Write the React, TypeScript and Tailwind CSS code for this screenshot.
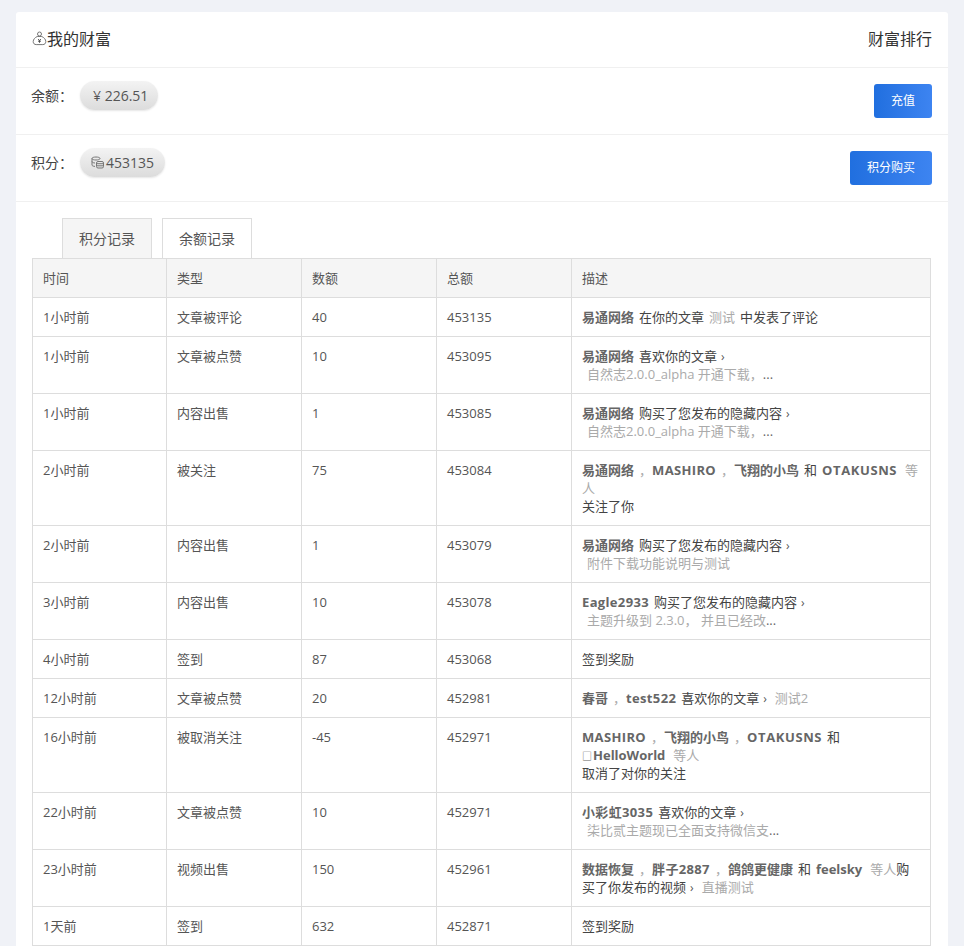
import type { ReactNode } from 'react';

const B = ({ children }: { children: ReactNode }) => (
  <span className="font-bold text-[#666]">{children}</span>
);
// bold latin names run a little wider in the reference
const L = ({ children }: { children: ReactNode }) => (
  <span className="font-bold tracking-[0.35px] text-[#666]">{children}</span>
);
const Otaku = () => <span className="font-bold tracking-[0.6px] text-[#666]">OTAKUSNS</span>;
const G = ({ children }: { children: ReactNode }) => <span className="text-[#aaa]">{children}</span>;
const Sp = () => <span className="inline-block w-[5px]" />;
const Comma = () => (
  <>
    <Sp />
    <G>，</G>
  </>
);
const Others = () => (
  <>
    <span className="inline-block w-[8px]" />
    <G>等人</G>
  </>
);
const Arrow = () => <span className="ml-[4px] text-xs text-[#555]">›</span>;
const Sub = ({ children }: { children: ReactNode }) => (
  <div className="pl-[5px] text-[#aaa]">{children}</div>
);
const Dots = () => <span className="text-[#666]">...</span>;

const ROWS: [string, string, string, string, ReactNode][] = [
  ['1小时前', '文章被评论', '40', '453135', <><B>易通网络</B><Sp />在你的文章<Sp /><G>测试</G><Sp />中发表了评论</>],
  ['1小时前', '文章被点赞', '10', '453095', <><B>易通网络</B><Sp />喜欢你的文章<Arrow /><Sub>自然志2.0.0_alpha 开通下载，<Dots /></Sub></>],
  ['1小时前', '内容出售', '1', '453085', <><B>易通网络</B><Sp />购买了您发布的隐藏内容<Arrow /><Sub>自然志2.0.0_alpha 开通下载，<Dots /></Sub></>],
  ['2小时前', '被关注', '75', '453084', <><B>易通网络</B><Comma /><L>MASHIRO</L><Comma /><B>飞翔的小鸟</B><Sp />和<Sp /><Otaku /><Others /><div>关注了你</div></>],
  ['2小时前', '内容出售', '1', '453079', <><B>易通网络</B><Sp />购买了您发布的隐藏内容<Arrow /><Sub>附件下载功能说明与测试</Sub></>],
  ['3小时前', '内容出售', '10', '453078', <><L>Eagle2933</L><Sp />购买了您发布的隐藏内容<Arrow /><Sub>主题升级到 2.3.0， 并且已经改<Dots /></Sub></>],
  ['4小时前', '签到', '87', '453068', '签到奖励'],
  ['12小时前', '文章被点赞', '20', '452981', <><B>春哥</B><Comma /><L>test522</L><Sp />喜欢你的文章<Arrow /><span className="inline-block w-[8px]" /><G>测试2</G></>],
  ['16小时前', '被取消关注', '-45', '452971', <><L>MASHIRO</L><Comma /><B>飞翔的小鸟</B><Comma /><Otaku /><Sp />和<br /><span className="inline-block w-[11px] text-[10px] leading-none text-[#666]">□</span><B>HelloWorld</B><Others /><div>取消了对你的关注</div></>],
  ['22小时前', '文章被点赞', '10', '452971', <><L>小彩虹3035</L><Sp />喜欢你的文章<Arrow /><Sub>柒比贰主题现已全面支持微信支<Dots /></Sub></>],
  ['23小时前', '视频出售', '150', '452961', <><B>数据恢复</B><Comma /><L>胖子2887</L><Comma /><B>鸽鸽更健康</B><Sp />和<Sp /><B>feelsky</B><Others />购买了你发布的视频<Arrow /><span className="inline-block w-[8px]" /><G>直播测试</G></>],
  ['1天前', '签到', '632', '452871', '签到奖励'],
];

function BagIcon() {
  return (
    <svg width="15" height="15" viewBox="0 0 15 15" fill="none" stroke="#777" strokeWidth="1">
      <circle cx="7.5" cy="3" r="2" />
      <path d="M5.2 5.5C3 6.5 1.2 8.4 1.2 10.6c0 1.9 1.3 3 3 3h6.6c1.7 0 3-1.1 3-3 0-2.2-1.8-4.1-4-5.1z" />
      <path d="M6 8.2 7.5 9.4 9 8.2M7.5 9.4v2.4M6 10.2h3" stroke="#444" strokeWidth="0.9" />
    </svg>
  );
}

function CoinsIcon() {
  return (
    <svg width="13" height="13" viewBox="0 0 13 13" fill="none" stroke="#777" strokeWidth="1">
      <path d="M1 2.5C1 1.5 3 1 5 1s4 .5 4 1.5S7 4 5 4 1 3.5 1 2.5z" />
      <path d="M1 2.5V9c0 .8 1.2 1.3 3 1.4M1 5.5c0 .8 1.2 1.4 3 1.5" />
      <rect x="5.5" y="5.5" width="7" height="6.5" rx="1.5" />
      <path d="M5.5 7.7h7M5.5 9.8h7" />
    </svg>
  );
}

function Pill({ children, className }: { children: ReactNode; className: string }) {
  return (
    <span className={`ml-[7px] inline-flex h-[29px] items-center rounded-full bg-gradient-to-b from-[#f3f3f3] to-[#dcdcdc] text-sm text-[#555] shadow-[0_1px_2px_rgba(0,0,0,0.1)] ${className}`}>
      {children}
    </span>
  );
}

function BlueButton({ children, className }: { children: ReactNode; className: string }) {
  return (
    <button className={`h-[34px] rounded-[3px] bg-gradient-to-r from-[#206fdf] to-[#3d84f1] text-xs text-white ${className}`}>
      {children}
    </button>
  );
}

export default function App() {
  return (
    <div className="h-[946px] overflow-hidden bg-[#f0f2f7] px-4 pt-3 font-['Open_Sans','Noto_Sans_CJK_SC',sans-serif] text-[13px] leading-[18px] text-[#444]">
      <div className="rounded-t-[3px] bg-white">
        <div className="flex h-[56px] items-center justify-between border-b border-[#f0f0f0] px-4 pb-[2px] text-base text-[#333]">
          <span className="flex items-center">
            <BagIcon />
            我的财富
          </span>
          <span>财富排行</span>
        </div>

        <div className="flex h-[67px] justify-between border-b border-[#f0f0f0] pl-[15px] pr-4 pt-[13px]">
          <div className="flex items-start text-sm text-[#444]">
            <span className="pt-[2px] leading-[25px]">余额：</span>
            <Pill className="pl-[13px] pr-[10px]">¥ 226.51</Pill>
          </div>
          <BlueButton className="mt-[3px] w-[58px]">充值</BlueButton>
        </div>

        <div className="flex h-[67px] justify-between border-b border-[#f0f0f0] pl-[15px] pr-4 pt-[13px]">
          <div className="flex items-start text-sm text-[#444]">
            <span className="pt-[2px] leading-[25px]">积分：</span>
            <Pill className="gap-[2px] px-[11px]">
              <CoinsIcon />
              453135
            </Pill>
          </div>
          <BlueButton className="mt-[3px] w-[82px]">积分购买</BlueButton>
        </div>

        <div className="px-4 pt-4">
          <div className="flex gap-[10px] pl-[30px] text-sm">
            <div className="flex h-10 w-[90px] items-center justify-center border border-b-0 border-[#ddd] bg-[#f5f5f5] text-[#555]">积分记录</div>
            <div className="flex h-10 w-[90px] items-center justify-center border border-b-0 border-[#ddd] bg-white text-[#555]">余额记录</div>
          </div>
          <table className="w-[899px] table-fixed border-collapse">
            <colgroup>
              <col className="w-[134px]" />
              <col className="w-[135px]" />
              <col className="w-[135px]" />
              <col className="w-[135px]" />
              <col />
            </colgroup>
            <thead>
              <tr className="bg-[#f5f5f5]">
                {['时间', '类型', '数额', '总额', '描述'].map((h) => (
                  <th key={h} className="border border-[#ddd] p-[10px] text-left font-normal text-[#555]">{h}</th>
                ))}
              </tr>
            </thead>
            <tbody>
              {ROWS.map((r, i) => (
                <tr key={i}>
                  {r.map((c, j) => (
                    <td key={j} className={`border border-[#ddd] p-[10px] align-top ${j === 4 ? 'text-[#444]' : 'text-[#555]'}`}>{c}</td>
                  ))}
                </tr>
              ))}
            </tbody>
          </table>
        </div>
      </div>
    </div>
  );
}
